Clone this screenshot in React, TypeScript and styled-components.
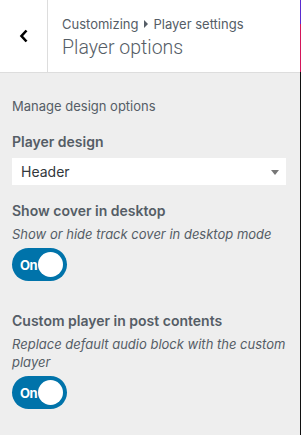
import React from "react";
import styled, { createGlobalStyle } from "styled-components";

const GlobalStyle = createGlobalStyle`
  html, body {
    margin: 0;
    padding: 0;
    background: #eeeeee;
  }
  body {
    font-family: Inter, "Noto Sans", "Liberation Sans", sans-serif;
    color: #555d66;
  }
`;

const Page = styled.div`
  display: flex;
  width: 301px;
  height: 435px;
  overflow: hidden;
`;

const Panel = styled.div`
  width: 300px;
  display: flex;
  flex-direction: column;
  background: #eeeeee;
`;

const EdgeStrip = styled.div`
  width: 1px;
  background: linear-gradient(
    180deg,
    #5b2bd0 0px,
    #5b2bd0 24px,
    #d4145a 24px,
    #d4145a 72px,
    #111111 72px
  );
`;

const Header = styled.div`
  display: flex;
  height: 72px;
  background: #ffffff;
  border-bottom: 1px solid #dddddd;
`;

const BackButton = styled.button`
  width: 48px;
  flex: none;
  display: flex;
  align-items: center;
  justify-content: center;
  padding: 0;
  border: 0;
  border-right: 1px solid #dddddd;
  background: transparent;
  cursor: pointer;
`;

const Titles = styled.div`
  display: flex;
  flex-direction: column;
  justify-content: center;
  padding-left: 14px;
  padding-top: 3px;
`;

const Crumb = styled.div`
  display: flex;
  align-items: center;
  font-size: 13px;
  line-height: 18px;
  color: #555d66;
`;

const CrumbArrow = styled.span`
  display: inline-block;
  width: 0;
  height: 0;
  margin: 0 5px 0 6px;
  border-top: 4px solid transparent;
  border-bottom: 4px solid transparent;
  border-left: 4px solid #555d66;
`;

const Title = styled.div`
  font-family: Roboto, Inter, sans-serif;
  font-size: 19.5px;
  font-weight: 300;
  line-height: 26px;
  color: #555d66;
  margin-top: 2px;
`;

const Content = styled.div`
  display: flex;
  flex-direction: column;
  padding: 24px 14px 0 12px;
`;

const Intro = styled.div`
  font-size: 13px;
  line-height: 18px;
  margin-bottom: 17px;
`;

const Section = styled.div<{ $gap?: number }>`
  display: flex;
  flex-direction: column;
  margin-bottom: ${(p) => p.$gap ?? 0}px;
`;

const Label = styled.div`
  font-size: 14px;
  font-weight: 600;
  line-height: 20px;
  color: #555d66;
`;

const Description = styled.div`
  font-size: 13px;
  font-style: italic;
  line-height: 18px;
  margin-top: 4px;
  margin-bottom: 5px;
`;

const SelectBox = styled.div`
  position: relative;
  margin-top: 6px;
  height: 27px;
  display: flex;
  align-items: center;
  padding-left: 9px;
  background: #ffffff;
  font-size: 14px;
  color: #32373c;
`;

const SelectArrow = styled.span`
  position: absolute;
  right: 7px;
  top: 12px;
  width: 0;
  height: 0;
  border-left: 4px solid transparent;
  border-right: 4px solid transparent;
  border-top: 5px solid #777777;
`;

const Toggle = styled.div`
  position: relative;
  width: 55px;
  height: 33px;
  border-radius: 17px;
  background: #0073aa;
  display: flex;
  align-items: center;
  padding-left: 8px;
  box-sizing: border-box;
  color: #ffffff;
  font-size: 13px;
  font-weight: 700;
  letter-spacing: -0.4px;
`;

const Knob = styled.span`
  position: absolute;
  right: 4px;
  top: 4px;
  width: 25px;
  height: 25px;
  border-radius: 50%;
  background: #ffffff;
`;

function Switch() {
  return (
    <Toggle>
      On
      <Knob />
    </Toggle>
  );
}

export default function App() {
  return (
    <>
      <GlobalStyle />
      <Page>
        <Panel>
          <Header>
            <BackButton aria-label="Back">
              <svg width="12" height="14" viewBox="0 0 12 14">
                <polyline
                  points="8.5,1.5 3.5,7 8.5,12.5"
                  fill="none"
                  stroke="#000"
                  strokeWidth="2.6"
                />
              </svg>
            </BackButton>
            <Titles>
              <Crumb>
                Customizing
                <CrumbArrow />
                Player settings
              </Crumb>
              <Title>Player options</Title>
            </Titles>
          </Header>
          <Content>
            <Intro>Manage design options</Intro>
            <Section $gap={16}>
              <Label>Player design</Label>
              <SelectBox>
                Header
                <SelectArrow />
              </SelectBox>
            </Section>
            <Section $gap={30}>
              <Label>Show cover in desktop</Label>
              <Description>Show or hide track cover in desktop mode</Description>
              <Switch />
            </Section>
            <Section>
              <Label>Custom player in post contents</Label>
              <Description>
                Replace default audio block with the custom player
              </Description>
              <Switch />
            </Section>
          </Content>
        </Panel>
        <EdgeStrip />
      </Page>
    </>
  );
}
